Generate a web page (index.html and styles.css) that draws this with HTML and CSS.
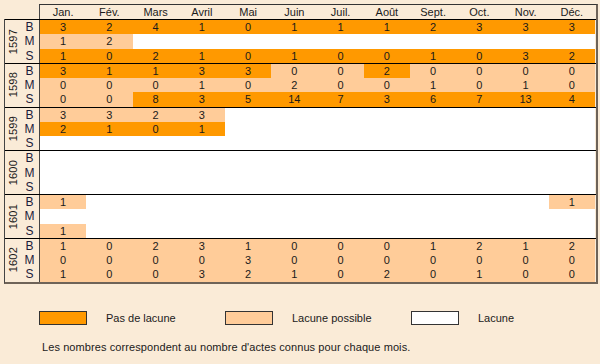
FILE: index.html
```html
<!DOCTYPE html>
<html lang="fr">
<head>
<meta charset="utf-8">
<title>Registres</title>
<link rel="stylesheet" href="styles.css">
</head>
<body>
<div class="chart">
  <div class="head">
    <div>Jan.</div><div>Fév.</div><div>Mars</div><div>Avril</div><div>Mai</div><div>Juin</div>
    <div>Juil.</div><div>Août</div><div>Sept.</div><div>Oct.</div><div>Nov.</div><div>Déc.</div>
  </div>
  <div class="body">
    <div class="group">
      <div class="year"><span>1597</span></div>
      <div class="letters"><span>B</span><span>M</span><span>S</span></div>
      <div class="cells">
        <div class="o">3</div><div class="o">2</div><div class="o">4</div><div class="o">1</div><div class="o">0</div><div class="o">1</div><div class="o">1</div><div class="o">1</div><div class="o">2</div><div class="o">3</div><div class="o">3</div><div class="o">3</div>
        <div class="l">1</div><div class="l">2</div><div class="w"></div><div class="w"></div><div class="w"></div><div class="w"></div><div class="w"></div><div class="w"></div><div class="w"></div><div class="w"></div><div class="w"></div><div class="w"></div>
        <div class="o">1</div><div class="o">0</div><div class="o">2</div><div class="o">1</div><div class="o">0</div><div class="o">1</div><div class="o">0</div><div class="o">0</div><div class="o">1</div><div class="o">0</div><div class="o">3</div><div class="o">2</div>
      </div>
    </div>
    <div class="group">
      <div class="year"><span>1598</span></div>
      <div class="letters"><span>B</span><span>M</span><span>S</span></div>
      <div class="cells">
        <div class="o">3</div><div class="o">1</div><div class="o">1</div><div class="o">3</div><div class="o">3</div><div class="l">0</div><div class="l">0</div><div class="o">2</div><div class="l">0</div><div class="l">0</div><div class="l">0</div><div class="l">0</div>
        <div class="l">0</div><div class="l">0</div><div class="l">0</div><div class="l">1</div><div class="l">0</div><div class="l">2</div><div class="l">0</div><div class="l">0</div><div class="l">1</div><div class="l">0</div><div class="l">1</div><div class="l">0</div>
        <div class="l">0</div><div class="l">0</div><div class="o">8</div><div class="o">3</div><div class="o">5</div><div class="o">14</div><div class="o">7</div><div class="o">3</div><div class="o">6</div><div class="o">7</div><div class="o">13</div><div class="o">4</div>
      </div>
    </div>
    <div class="group">
      <div class="year"><span>1599</span></div>
      <div class="letters"><span>B</span><span>M</span><span>S</span></div>
      <div class="cells">
        <div class="l">3</div><div class="l">3</div><div class="l">2</div><div class="l">3</div><div class="w"></div><div class="w"></div><div class="w"></div><div class="w"></div><div class="w"></div><div class="w"></div><div class="w"></div><div class="w"></div>
        <div class="o">2</div><div class="o">1</div><div class="o">0</div><div class="o">1</div><div class="w"></div><div class="w"></div><div class="w"></div><div class="w"></div><div class="w"></div><div class="w"></div><div class="w"></div><div class="w"></div>
        <div class="w"></div><div class="w"></div><div class="w"></div><div class="w"></div><div class="w"></div><div class="w"></div><div class="w"></div><div class="w"></div><div class="w"></div><div class="w"></div><div class="w"></div><div class="w"></div>
      </div>
    </div>
    <div class="group">
      <div class="year"><span>1600</span></div>
      <div class="letters"><span>B</span><span>M</span><span>S</span></div>
      <div class="cells">
        <div class="w"></div><div class="w"></div><div class="w"></div><div class="w"></div><div class="w"></div><div class="w"></div><div class="w"></div><div class="w"></div><div class="w"></div><div class="w"></div><div class="w"></div><div class="w"></div>
        <div class="w"></div><div class="w"></div><div class="w"></div><div class="w"></div><div class="w"></div><div class="w"></div><div class="w"></div><div class="w"></div><div class="w"></div><div class="w"></div><div class="w"></div><div class="w"></div>
        <div class="w"></div><div class="w"></div><div class="w"></div><div class="w"></div><div class="w"></div><div class="w"></div><div class="w"></div><div class="w"></div><div class="w"></div><div class="w"></div><div class="w"></div><div class="w"></div>
      </div>
    </div>
    <div class="group">
      <div class="year"><span>1601</span></div>
      <div class="letters"><span>B</span><span>M</span><span>S</span></div>
      <div class="cells">
        <div class="l">1</div><div class="w"></div><div class="w"></div><div class="w"></div><div class="w"></div><div class="w"></div><div class="w"></div><div class="w"></div><div class="w"></div><div class="w"></div><div class="w"></div><div class="l">1</div>
        <div class="w"></div><div class="w"></div><div class="w"></div><div class="w"></div><div class="w"></div><div class="w"></div><div class="w"></div><div class="w"></div><div class="w"></div><div class="w"></div><div class="w"></div><div class="w"></div>
        <div class="l">1</div><div class="w"></div><div class="w"></div><div class="w"></div><div class="w"></div><div class="w"></div><div class="w"></div><div class="w"></div><div class="w"></div><div class="w"></div><div class="w"></div><div class="w"></div>
      </div>
    </div>
    <div class="group">
      <div class="year"><span>1602</span></div>
      <div class="letters"><span>B</span><span>M</span><span>S</span></div>
      <div class="cells">
        <div class="l">1</div><div class="l">0</div><div class="l">2</div><div class="l">3</div><div class="l">1</div><div class="l">0</div><div class="l">0</div><div class="l">0</div><div class="l">1</div><div class="l">2</div><div class="l">1</div><div class="l">2</div>
        <div class="l">0</div><div class="l">0</div><div class="l">0</div><div class="l">0</div><div class="l">3</div><div class="l">0</div><div class="l">0</div><div class="l">0</div><div class="l">0</div><div class="l">0</div><div class="l">0</div><div class="l">0</div>
        <div class="l">1</div><div class="l">0</div><div class="l">0</div><div class="l">3</div><div class="l">2</div><div class="l">1</div><div class="l">0</div><div class="l">2</div><div class="l">0</div><div class="l">1</div><div class="l">0</div><div class="l">0</div>
      </div>
    </div>
  </div>
</div>
<div class="legend">
  <div class="item"><span class="swatch o"></span><span>Pas de lacune</span></div>
  <div class="item"><span class="swatch l"></span><span>Lacune possible</span></div>
  <div class="item"><span class="swatch w"></span><span>Lacune</span></div>
</div>
<p class="note">Les nombres correspondent au nombre d'actes connus pour chaque mois.</p>
</body>
</html>
```

FILE: styles.css
```css
html, body {
  margin: 0;
  padding: 0;
  background: #faebd7;
  font-family: "Liberation Sans", Arial, sans-serif;
  font-size: 11px;
  color: #1a1a1a;
}

.chart {
  margin: 4px 0 0 4px;
  width: 594px;
}

.head {
  margin-left: 35px;
  display: grid;
  grid-template-columns: repeat(12, 46.25px);
  height: 14px;
  line-height: 15px;
  border-top: 1px solid #333;
  border-left: 1px solid #444;
  border-right: 2px solid #6e6358;
  text-align: center;
}

.body {
  border-left: 1px solid #444;
  border-right: 2px solid #6e6358;
  border-bottom: 2px solid #6e6358;
}

.group {
  display: flex;
  border-top: 1px solid #000;
}

.year {
  width: 15px;
  display: flex;
  align-items: center;
  justify-content: center;
}

.year span {
  writing-mode: vertical-rl;
  transform: rotate(180deg);
  line-height: 12px;
  letter-spacing: 0.2px;
}

.letters {
  width: 19px;
  display: grid;
  grid-auto-rows: 14.25px;
  line-height: 14.25px;
  text-align: center;
  border-right: 1px solid #444;
  color: #1c1c3a;
  font-size: 12px;
}

.cells {
  width: 555px;
  display: grid;
  grid-template-columns: repeat(12, 1fr);
  grid-auto-rows: 14.25px;
  line-height: 14.25px;
  text-align: center;
}

.o { background: #ff9900; }
.l { background: #ffcc99; }
.w { background: #ffffff; }

.legend {
  display: flex;
  margin: 27px 0 0 39px;
}

.item {
  width: 186px;
  display: flex;
  align-items: center;
}

.swatch {
  width: 46px;
  height: 12px;
  border: 1px solid #333;
  margin-right: 19px;
}

.note {
  margin: 16px 0 0 42px;
  letter-spacing: 0.09px;
}
```
